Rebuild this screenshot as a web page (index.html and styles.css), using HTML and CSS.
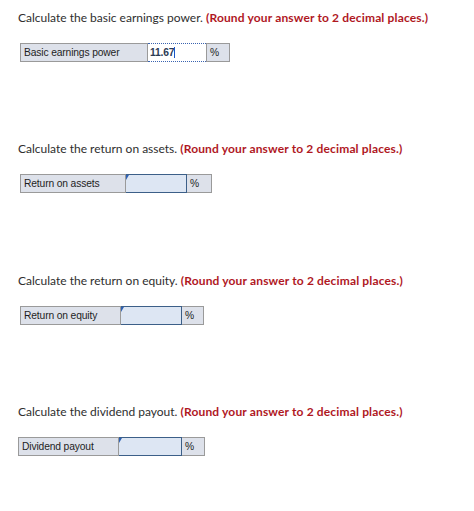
FILE: index.html
```html
<!DOCTYPE html>
<html lang="en">
<head>
    <meta charset="UTF-8">
    <title>Ratios</title>
    <link rel="stylesheet" href="styles.css">
</head>
<body>
    <div class="question">
        <p class="prompt">Calculate the basic earnings power. <strong>(Round your answer to 2 decimal places.)</strong></p>
        <table class="answer answer-bep">
            <tr>
                <td class="label">Basic earnings power</td>
                <td class="field field-active"><span class="typed">11.67</span><span class="caret"></span></td>
                <td class="unit">%</td>
            </tr>
        </table>
    </div>

    <div class="question">
        <p class="prompt">Calculate the return on assets. <strong>(Round your answer to 2 decimal places.)</strong></p>
        <table class="answer answer-roa">
            <tr>
                <td class="label">Return on assets</td>
                <td class="field"><span class="flag"></span></td>
                <td class="unit">%</td>
            </tr>
        </table>
    </div>

    <div class="question">
        <p class="prompt">Calculate the return on equity. <strong>(Round your answer to 2 decimal places.)</strong></p>
        <table class="answer answer-roe">
            <tr>
                <td class="label">Return on equity</td>
                <td class="field"><span class="flag"></span></td>
                <td class="unit">%</td>
            </tr>
        </table>
    </div>

    <div class="question">
        <p class="prompt">Calculate the dividend payout. <strong>(Round your answer to 2 decimal places.)</strong></p>
        <table class="answer answer-payout">
            <tr>
                <td class="label">Dividend payout</td>
                <td class="field"><span class="flag"></span></td>
                <td class="unit">%</td>
            </tr>
        </table>
    </div>
</body>
</html>
```

FILE: styles.css
```css
* {
    margin: 0;
    padding: 0;
    box-sizing: border-box;
}

body {
    font-family: Lato, "Open Sans", sans-serif;
    background: #fff;
    color: #333;
    padding: 9px 0 0 18px;
}

.question {
    height: 131.3px;
}

.prompt {
    font-size: 12px;
    line-height: 17px;
    color: #2e2e2e;
}

.prompt strong {
    color: #b0181f;
    font-weight: 700;
    letter-spacing: 0.15px;
}

.answer {
    margin-top: 17px;
    margin-left: 2px;
    border-collapse: collapse;
    font-family: "Liberation Sans", Arial, sans-serif;
    font-size: 10.3px;
    letter-spacing: -0.15px;
    color: #1e1e1e;
}

.answer td {
    height: 18px;
    border: 1px solid #9a9a9a;
    background: #dde1ea;
    padding: 0 3px;
    vertical-align: middle;
}

.label {
    width: 127px;
}

.field {
    position: relative;
    width: 59px;
}

.answer td.field {
    background: #dde6f3;
    border: 1px solid #3c5f88;
}

.answer td.field-active {
    background: #fff;
    border: 1px dotted #3a63b0;
    font-weight: bold;
    color: #2b3a55;
    padding-left: 2px;
}

.caret {
    display: inline-block;
    width: 1px;
    height: 11px;
    background: #1a56c8;
    vertical-align: -2px;
}

.flag {
    position: absolute;
    left: 0;
    top: 0;
    width: 0;
    height: 0;
    border-top: 5px solid #2f61b4;
    border-right: 3px solid transparent;
}

.unit {
    width: 23px;
}

.answer-roa .label { width: 105px; }
.answer-roa .field { width: 61px; }
.answer-roa .unit { width: 25px; }

.answer-roe .label { width: 100px; }
.answer-roe .field { width: 61px; }
.answer-roe .unit { width: 22px; }

.answer-payout { margin-left: 0; }
.answer-payout .label { width: 100px; }
.answer-payout .field { width: 63px; }
.answer-payout .unit { width: 23px; }
```
